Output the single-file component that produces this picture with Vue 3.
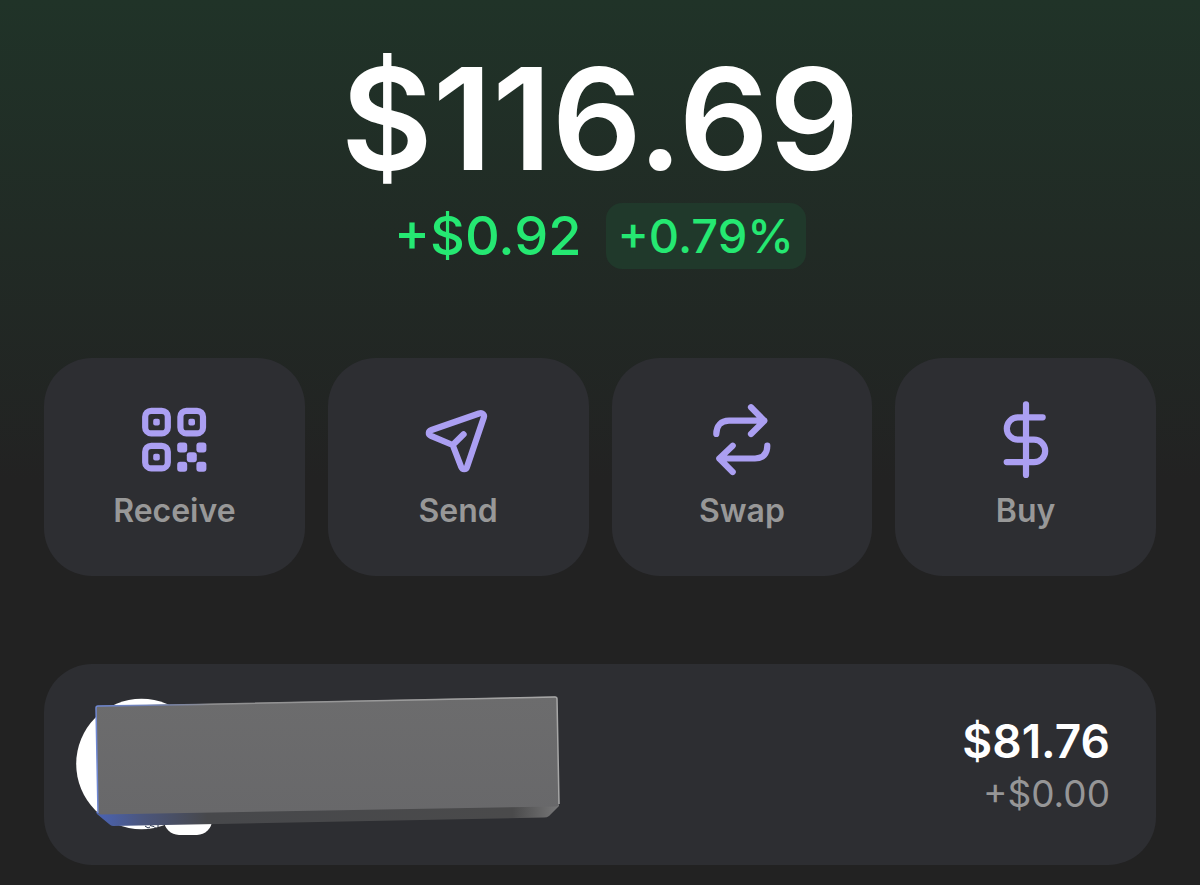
<template>
  <main class="wallet">
    <section class="balance">
      <h1 class="total">{{ balance.total }}</h1>
      <div class="change">
        <span class="amount">{{ balance.change }}</span>
        <span class="percent">{{ balance.percent }}</span>
      </div>
    </section>

    <nav class="actions">
      <button v-for="action in actions" :key="action.name" type="button" class="action">
        <svg class="icon" viewBox="0 0 80 80" aria-hidden="true">
          <template v-if="action.name === 'Receive'">
            <rect v-for="(s, i) in qrSquares" :key="'s' + i" :x="s[0]" :y="s[1]" width="22.6" height="22.6" rx="6" />
            <rect v-for="(s, i) in qrSquares" :key="'d' + i" class="solid" :x="s[0] + 8" :y="s[1] + 8" width="6.6" height="6.6" rx="2" />
            <rect v-for="(d, i) in qrDots" :key="'q' + i" class="solid" :x="d[0]" :y="d[1]" width="10" height="10" rx="3" />
          </template>
          <path v-else :d="action.path" />
        </svg>
        <span class="label">{{ action.name }}</span>
      </button>
    </nav>

    <section class="account">
      <!-- avatar with the covered account name -->
      <svg class="cover" viewBox="76 696 484 140" aria-hidden="true">
        <defs>
          <linearGradient id="face" x1="0" y1="0" x2="0" y2="1">
            <stop offset="0" stop-color="#6c6c6d" />
            <stop offset="1" stop-color="#68686a" />
          </linearGradient>
          <linearGradient id="under" x1="0" y1="0" x2="1" y2="0">
            <stop offset="0" stop-color="#4a63b4" />
            <stop offset="0.1" stop-color="#4b567d" />
            <stop offset="0.24" stop-color="#47484b" />
            <stop offset="0.9" stop-color="#4a4a4b" />
            <stop offset="1" stop-color="#777778" />
          </linearGradient>
          <linearGradient id="edge" x1="0" y1="0" x2="1" y2="0">
            <stop offset="0" stop-color="#6f88d4" />
            <stop offset="0.14" stop-color="#707eaa" />
            <stop offset="0.25" stop-color="#8e8e8f" />
            <stop offset="1" stop-color="#a6a6a6" />
          </linearGradient>
        </defs>
        <circle cx="141.5" cy="764" r="65.3" fill="#fff" />
        <path d="M145 826l3 2 2-1M150 825.500l4 1 2 2M158 825v2" fill="none" stroke="#26324a" stroke-width="1" />
        <rect x="164" y="788" width="48" height="47" rx="15" fill="#fff" />
        <path d="M96 812L559 803.500V806L549 816Q547 817.500 544 817.500L113 826Q111 826 109 824L97 814Z" fill="url(#under)" />
        <path d="M98 706L555 696.500Q557 696.500 557 699L559 804.500Q559 806 556 806.500L101 814.500Q98 814.500 98 812L96 708Q96 706 98 706Z" fill="url(#face)" />
        <path d="M98 813L96 708Q96 706 98 706L200 704.500L555 697Q557 697 557 699L559 804" fill="none" stroke="url(#edge)" stroke-width="1.500" />
      </svg>
      <div class="value">
        <span class="worth">$81.76</span>
        <span class="diff">+$0.00</span>
      </div>
    </section>
  </main>
</template>

<script setup>
import { ref } from 'vue';

const balance = ref({
  total: '$116.69',
  change: '+$0.92',
  percent: '+0.79%'
});

const actions = [
  { name: 'Receive' },
  {
    name: 'Send',
    path: 'M61 14.5L13.5 31C10 32.3 10 35.5 13 36.8L34.7 46L43.2 68C44.4 71 48 71 49 68L65.8 18.5C66.8 15.5 64.5 13.5 61 14.5ZM34.7 46L45.6 35.3'
  },
  {
    name: 'Swap',
    path: 'M14.3 35C14.300 27 19 21.700 27 21.700H62.300M49 8.300L62.300 21.700L49 35M65.300 46.700C65.300 54.500 61 59.500 53 59.500H17.300M30.700 46.700L17.300 59.500L30.700 73'
  },
  {
    name: 'Buy',
    path: 'M40 5.300V76M56.700 18.300H32A11.200 11.200 0 0 0 32 40.700H48A11.200 11.200 0 0 1 48 63.100H20.700'
  }
];

const qrSquares = [[11.2, 11.8], [46.4, 11.8], [11.2, 46.8]];
const qrDots = [[43.2, 43.6], [62.4, 43.6], [52.8, 53.2], [43.2, 62.8], [62.4, 62.8]];
</script>

<style scoped>
.wallet {
  box-sizing: border-box;
  min-height: 100vh;
  padding: 35px 44px 20px;
  background: linear-gradient(180deg, #203328 0, #21261f00 480px), #222222;
  font-family: Inter, "Liberation Sans", sans-serif;
}

.balance {
  text-align: center;
}

.total {
  margin: 0;
  color: #fff;
  font-size: 141px;
  font-weight: 600;
  line-height: 168px;
}

.change {
  display: flex;
  justify-content: center;
  align-items: center;
  gap: 24px;
  color: #25e872;
}

.amount {
  font-size: 54px;
  font-weight: 500;
  line-height: 66px;
}

.percent {
  padding: 0 12px;
  border-radius: 16px;
  background: #20392b;
  font-size: 47px;
  font-weight: 500;
  line-height: 66px;
}

.actions {
  display: grid;
  grid-template-columns: repeat(4, 1fr);
  gap: 23px;
  margin-top: 89px;
}

.action {
  display: flex;
  flex-direction: column;
  align-items: center;
  padding: 41px 0 45px;
  border: none;
  border-radius: 48px;
  background: #2d2e32;
  font-family: inherit;
  cursor: pointer;
}

.action:hover {
  background: #34353a;
}

.icon {
  width: 80px;
  height: 80px;
  fill: none;
  stroke: #ab9ff2;
  stroke-width: 6.2;
  stroke-linecap: round;
  stroke-linejoin: round;
}

.solid {
  fill: #ab9ff2;
  stroke: none;
}

.label {
  margin-top: 12px;
  color: #989898;
  font-size: 32px;
  font-weight: 600;
  line-height: 40px;
}

.account {
  display: flex;
  justify-content: space-between;
  align-items: center;
  margin-top: 88px;
  padding: 32px 46px 29px 32px;
  border-radius: 48px;
  background: #2d2e32;
}

.cover {
  width: 484px;
  height: 140px;
}

.value {
  display: flex;
  flex-direction: column;
  align-items: flex-end;
  gap: 4px;
}

.worth {
  color: #fff;
  font-size: 46px;
  font-weight: 600;
  line-height: 52px;
}

.diff {
  color: #969697;
  font-size: 37px;
  line-height: 46px;
}
</style>

<style>
body {
  margin: 0;
  background: #222222;
}
</style>
